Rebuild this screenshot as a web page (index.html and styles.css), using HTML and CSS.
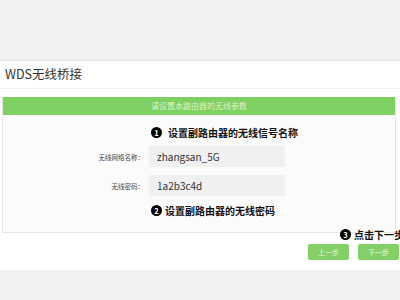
FILE: index.html
```html
<!DOCTYPE html>
<html lang="zh-CN">
  <head>
    <meta charset="UTF-8" />
    <meta name="viewport" content="width=device-width, initial-scale=1.0" />
    <title>WDS无线桥接</title>
    <link rel="stylesheet" href="styles.css">
  </head>
  <body>
    <div class="top"></div>
    <div class="panel">
      <div class="title">WDS无线桥接</div>
      <div class="section">
        <div class="bar">请设置本路由器的无线参数</div>
        <div class="form">
          <div class="step step-one">
            <span class="num">1</span>
            <span class="tip">设置副路由器的无线信号名称</span>
          </div>
          <div class="row">
            <label for="ssid">无线网络名称：</label>
            <div class="field" id="ssid">zhangsan_5G</div>
          </div>
          <div class="row">
            <label for="pwd">无线密码：</label>
            <div class="field" id="pwd">1a2b3c4d</div>
          </div>
          <div class="step step-two">
            <span class="num">2</span>
            <span class="tip">设置副路由器的无线密码</span>
          </div>
        </div>
      </div>
      <div class="footer">
        <div class="step step-three">
          <span class="num">3</span>
          <span class="tip">点击下一步</span>
        </div>
        <button class="btn">上一步</button>
        <button class="btn">下一步</button>
      </div>
    </div>
  </body>
</html>
```

FILE: styles.css
```css
* {
  box-sizing: border-box;
}
html,
body {
  margin: 0;
  padding: 0;
  background-color: #f2f2f2;
  font-family: "Noto Sans CJK SC", "Noto Sans", sans-serif;
  overflow: hidden;
}
.top {
  height: 60px;
}
.panel {
  position: relative;
  height: 210px;
  background: #fff;
  border-top: solid 1px #e2e2e2;
  box-shadow: 0 1px 2px rgba(0, 0, 0, 0.08);
}
.title {
  height: 28px;
  padding-left: 5px;
  font-size: 12.5px;
  line-height: 26px;
  color: #333;
  border-bottom: solid 1px #efefef;
}
.section {
  margin: 8px 4px 0 2px;
  border: solid 1px #e6e6e6;
  border-top: none;
}
.bar {
  height: 18px;
  background: #7fd062;
  color: #d9f2cd;
  font-size: 8px;
  line-height: 18px;
  text-align: center;
}
.form {
  height: 117px;
  background: #fbfbfb;
  padding-top: 11px;
}
.step {
  display: flex;
  align-items: center;
  height: 12px;
  font-size: 10px;
  font-weight: bold;
  color: #111;
}
.num {
  width: 11px;
  height: 11px;
  border-radius: 50%;
  background: #000;
  color: #fff;
  font-size: 7.5px;
  line-height: 11px;
  text-align: center;
}
.step-one {
  padding-left: 148px;
  gap: 6px;
  margin-bottom: 8px;
}
.step-two {
  padding-left: 148px;
  gap: 3px;
  margin-top: 5px;
}
.row {
  display: flex;
  align-items: center;
  gap: 5px;
  margin-bottom: 8px;
}
.row label {
  width: 141px;
  text-align: right;
  font-size: 6.5px;
  color: #444;
}
.field {
  width: 136px;
  height: 21px;
  padding-left: 8px;
  background: #f0f0f0;
  font-size: 10px;
  line-height: 21px;
  color: #333;
}
.footer {
  display: flex;
  justify-content: flex-end;
  gap: 9px;
  padding: 11px 1px 0 0;
}
.step-three {
  position: absolute;
  left: 340px;
  top: 167px;
  gap: 3px;
  white-space: nowrap;
}
.btn {
  width: 41px;
  height: 16px;
  padding: 0;
  border: none;
  border-radius: 2px;
  background: #85cf68;
  color: #eaf7e3;
  font-family: inherit;
  font-size: 7px;
  line-height: 16px;
}
```
